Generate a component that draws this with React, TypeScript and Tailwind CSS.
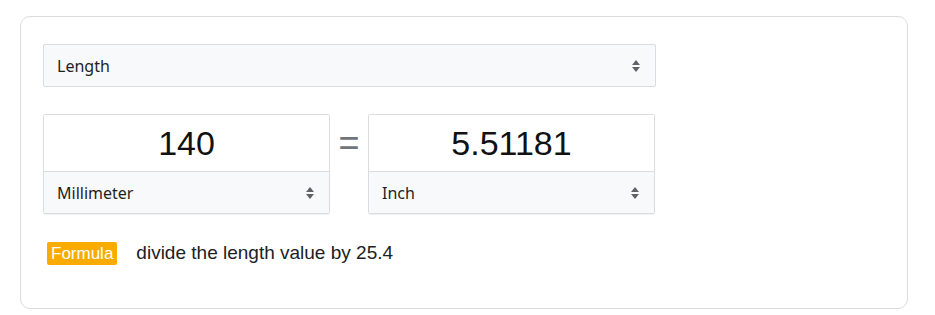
import React from 'react';

const SelectArrows: React.FC = () => (
  <svg width="10" height="16" viewBox="0 0 10 16" className="shrink-0">
    <path d="M5 2 L9 7 L1 7 Z" fill="#5f6368" />
    <path d="M5 14 L9 9 L1 9 Z" fill="#5f6368" />
  </svg>
);

interface UnitSelectProps {
  label: string;
  className?: string;
}

const UnitSelect: React.FC<UnitSelectProps> = ({ label, className = '' }) => (
  <div
    className={`flex items-center justify-between bg-[#f8f9fa] pl-[13px] pr-[14px] text-[16px] text-[#1f1f1f] ${className}`}
  >
    <span className="font-['Noto_Sans',sans-serif]">{label}</span>
    <SelectArrows />
  </div>
);

interface ValueBoxProps {
  value: string;
  unit: string;
}

const ValueBox: React.FC<ValueBoxProps> = ({ value, unit }) => (
  <div className="flex w-[287px] flex-col rounded-[2px] border border-[#dadce0] shadow-[0_1px_1px_rgba(0,0,0,0.06)]">
    <div className="flex h-[56px] items-center justify-center bg-white font-['Liberation_Sans',Arial,sans-serif] text-[34px] text-[#111]">
      {value}
    </div>
    <UnitSelect label={unit} className="h-[42px] border-t border-[#dadce0]" />
  </div>
);

const App: React.FC = () => {
  return (
    <div className="min-h-[315px] w-[935px] bg-white px-5 pt-4">
      <div className="w-[888px] rounded-[10px] border border-[#dadce0] pb-[43px] pl-[22px] pt-[27px]">
        <UnitSelect label="Length" className="h-[43px] w-[613px] rounded-[2px] border border-[#dadce0]" />

        <div className="mt-[27px] flex items-start">
          <ValueBox value="140" unit="Millimeter" />
          <div className="flex h-[58px] w-[38px] items-center justify-center font-['Liberation_Sans',Arial,sans-serif] text-[36px] text-[#70757a]">
            =
          </div>
          <ValueBox value="5.51181" unit="Inch" />
        </div>

        <div className="mt-[28px] flex h-[23px] items-center pl-1 font-['Liberation_Sans',Arial,sans-serif]">
          <span className="flex h-[23px] items-center rounded-[2px] bg-[#f9ab00] px-[4px] text-[17px] text-white">
            Formula
          </span>
          <span className="ml-[19px] text-[19px] text-[#202124]">divide the length value by 25.4</span>
        </div>
      </div>
    </div>
  );
};

export default App;
